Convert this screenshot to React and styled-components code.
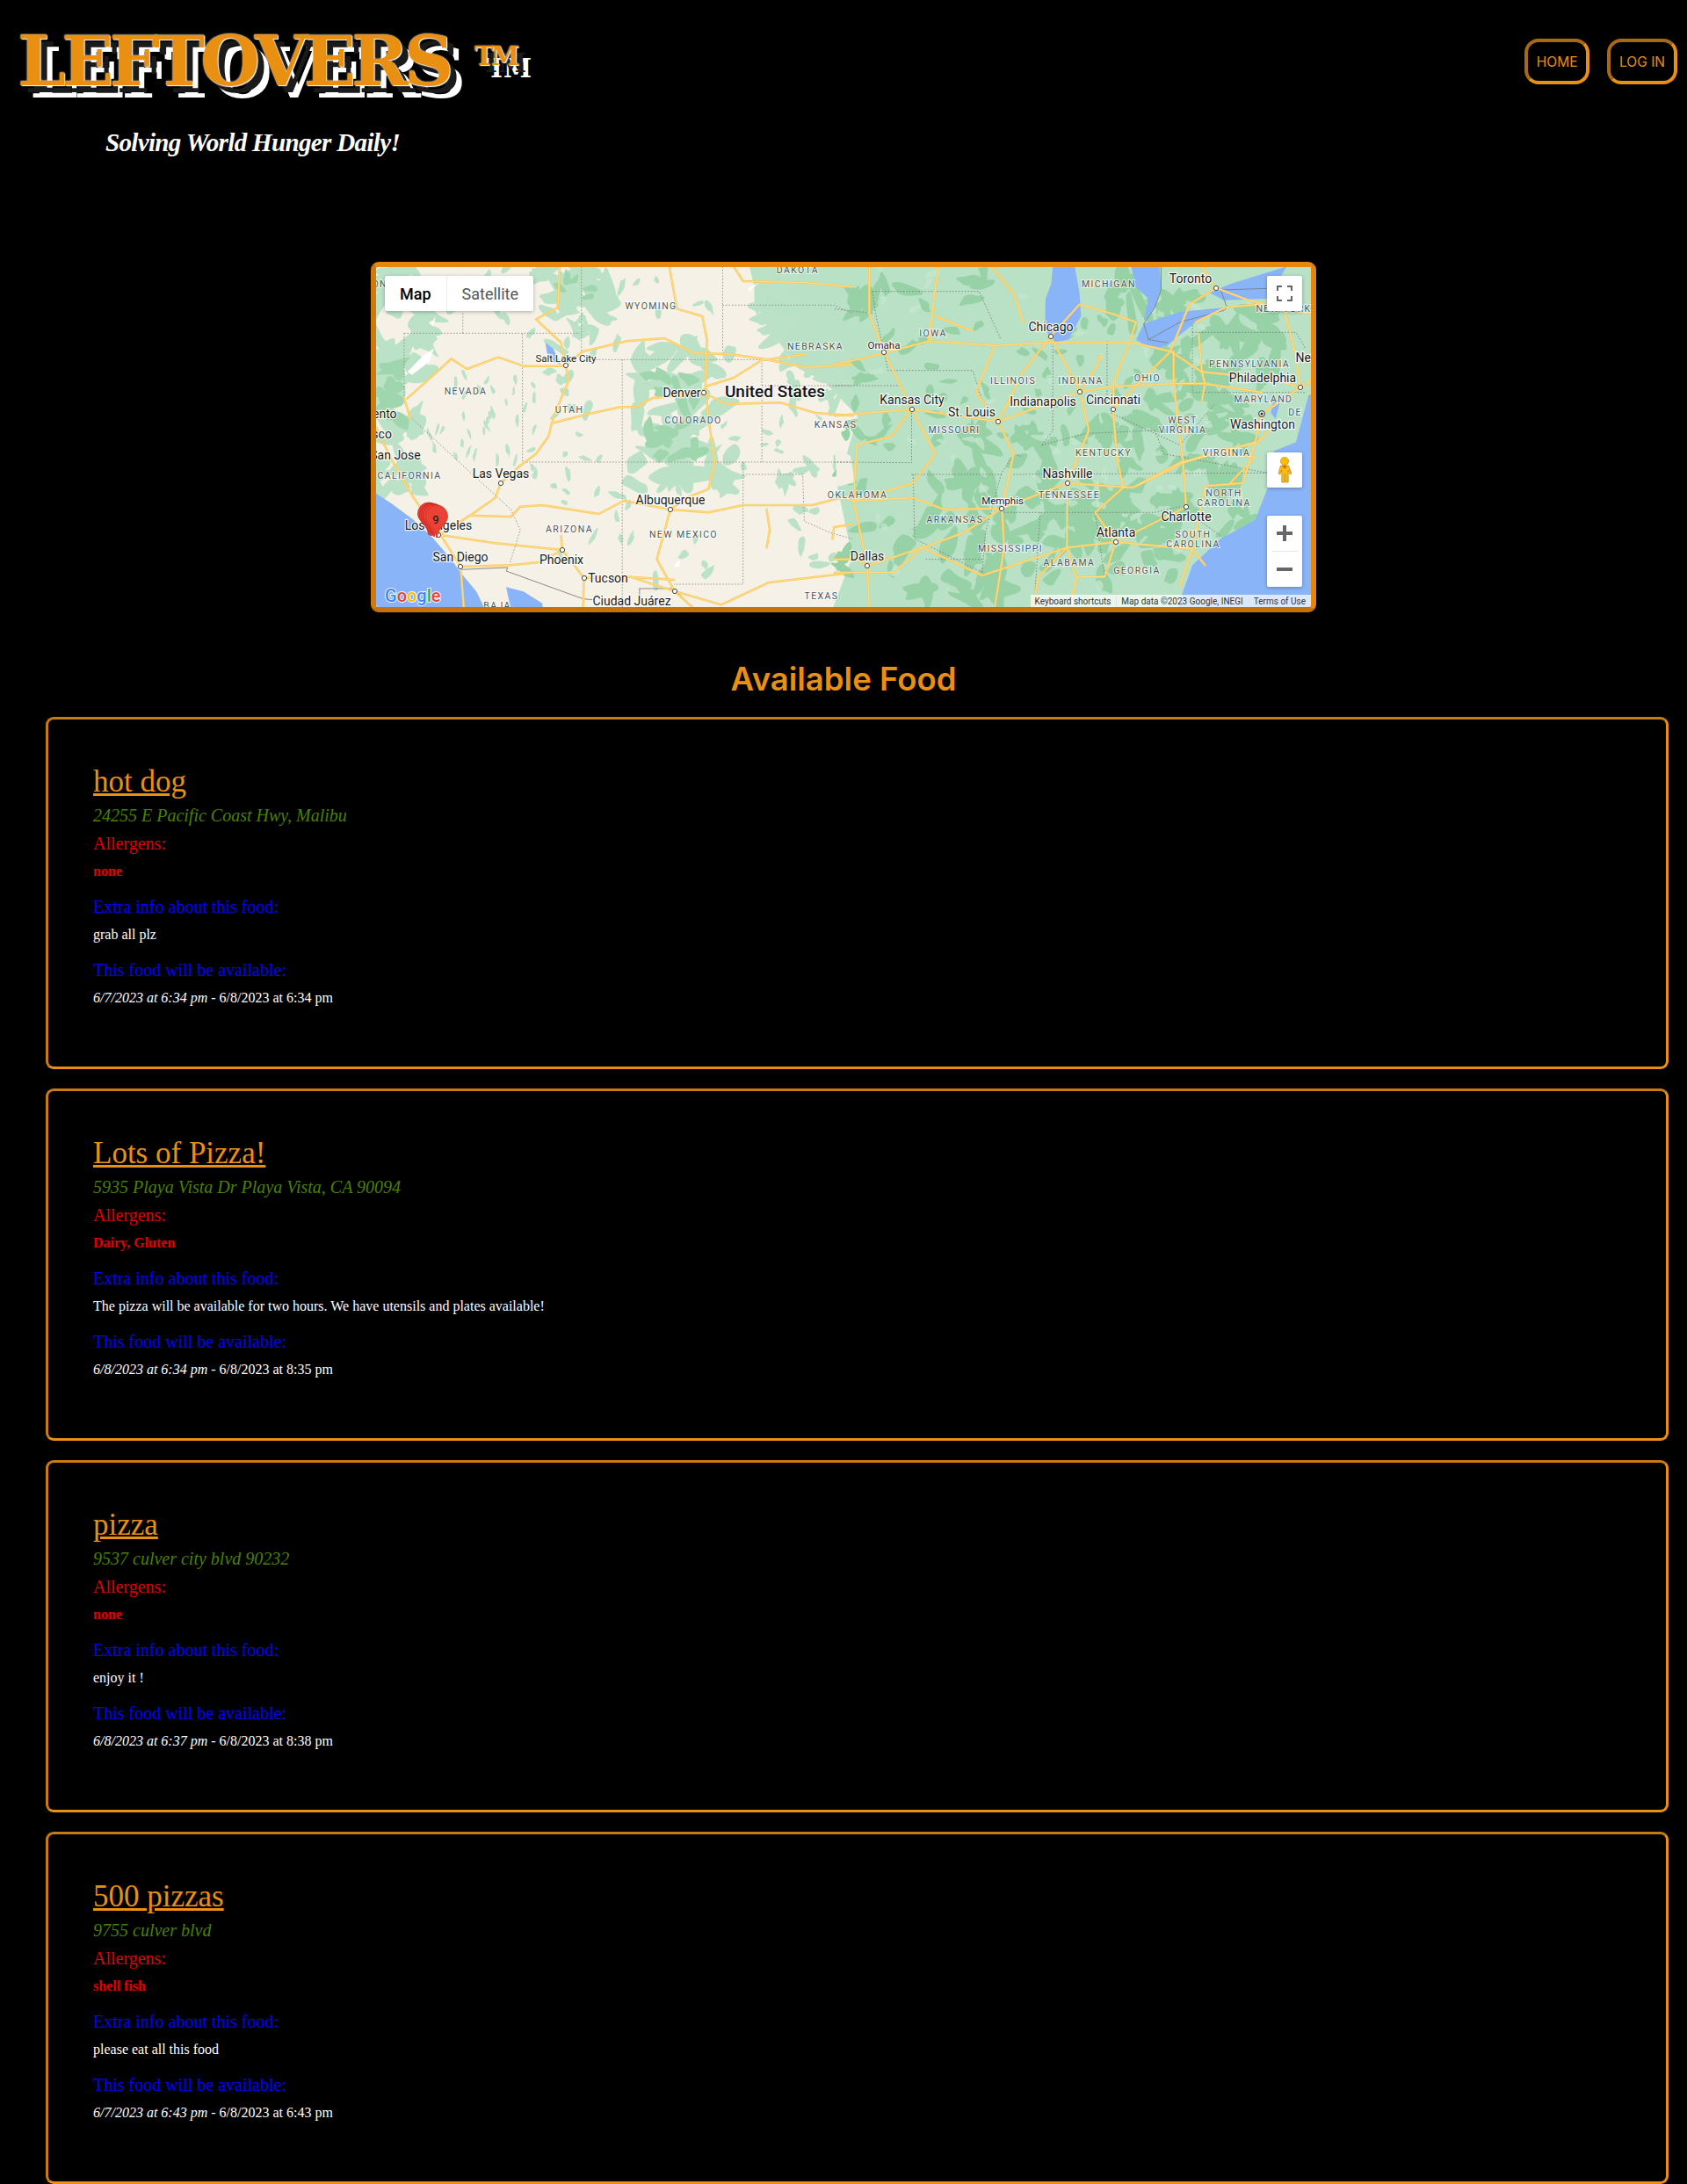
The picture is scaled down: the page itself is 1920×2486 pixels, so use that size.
import React from 'react';
import styled, { createGlobalStyle } from 'styled-components';

const orange = '#e98f12';
const orangeDim = '#c67c10';

const GlobalStyle = createGlobalStyle`
  html, body {
    margin: 0;
    background: #000;
  }
`;

const Page = styled.div`
  width: 1920px;
  height: 2486px;
  overflow: hidden;
  background: #000;
  font-family: 'Liberation Serif', serif;
`;

const Header = styled.header`
  display: flex;
  justify-content: space-between;
  align-items: flex-start;
  height: 298px;
  box-sizing: border-box;
  padding: 44px 11px 0 20px;
`;

const Brand = styled.div`
  display: flex;
  flex-direction: column;
`;

const LogoRow = styled.div`
  display: flex;
  align-items: flex-start;
  margin-top: -26px;
`;

const threeD = `
  0 0 2px #fff,
  1px 1px 1px #fff,
  8px 8px 0 #1a1a1a,
  14px 14px 0 #fff
`;

const Logo = styled.h1`
  margin: 0;
  font-family: 'DejaVu Serif', serif;
  font-size: 78px;
  line-height: 104px;
  font-weight: 700;
  letter-spacing: -4.9px;
  color: ${orange};
  text-shadow: ${threeD};
`;

const Trademark = styled.span`
  margin: 27px 0 0 29px;
  font-family: 'DejaVu Serif', serif;
  font-size: 29px;
  line-height: 38px;
  font-weight: 700;
  letter-spacing: -3px;
  color: ${orange};
  text-shadow: ${threeD};
`;

const Tagline = styled.p`
  margin: 22px 0 0 100px;
  font-size: 29px;
  line-height: 36px;
  font-style: italic;
  font-weight: 700;
  letter-spacing: -0.65px;
  color: #fff;
`;

const Nav = styled.nav`
  display: flex;
  gap: 20px;
`;

const NavButton = styled.a`
  display: flex;
  align-items: center;
  height: 52px;
  box-sizing: border-box;
  padding: 0 ${(p) => p.$pad}px;
  border: 4px solid;
  border-color: #a86a10 ${orange} ${orange} #a86a10;
  border-radius: 16px;
  color: ${orange};
  font-family: Inter, sans-serif;
  font-size: 15.5px;
`;

const MapFrame = styled.div`
  position: relative;
  width: 1076px;
  height: 399px;
  box-sizing: border-box;
  margin: 0 auto;
  border: 6px solid;
  border-color: #e8870c #e5860c #c77208 #d07a0c;
  border-radius: 9px;
  overflow: hidden;
  background: #f5f1e6;
`;

const MapSvg = styled.svg`
  display: block;
  width: 1064px;
  height: 387px;

  .city {
    font: 400 14px Roboto, sans-serif;
    fill: #1a1a1a;
    text-anchor: middle;
    stroke: rgba(255, 255, 255, 0.85);
    stroke-width: 2.4px;
    paint-order: stroke;
  }
  .small {
    font-size: 11.5px;
  }
  .country {
    font: 500 19px Roboto, sans-serif;
    fill: #111;
    text-anchor: middle;
    stroke: rgba(255, 255, 255, 0.85);
    stroke-width: 2.4px;
    paint-order: stroke;
  }
  .state {
    font: 400 10.5px Roboto, sans-serif;
    letter-spacing: 1.4px;
    fill: #50565a;
    text-anchor: middle;
    stroke: rgba(255, 255, 255, 0.7);
    stroke-width: 2.2px;
    paint-order: stroke;
  }
`;

const MapType = styled.div`
  position: absolute;
  top: 10px;
  left: 10px;
  display: flex;
  height: 40px;
  background: #fff;
  border-radius: 2px;
  box-shadow: 0 1px 4px rgba(0, 0, 0, 0.3);
`;

const MapTypeOption = styled.span`
  display: flex;
  align-items: center;
  padding: 0 17px;
  font-family: Roboto, sans-serif;
  font-size: 18px;
  font-weight: ${(p) => (p.$active ? 500 : 400)};
  color: ${(p) => (p.$active ? '#000' : '#565656')};
  border-left: ${(p) => (p.$active ? 'none' : '1px solid #ebebeb')};
`;

const MapControl = styled.div`
  position: absolute;
  top: ${(p) => p.$top}px;
  right: 10px;
  width: 40px;
  height: ${(p) => p.$h || 40}px;
  display: flex;
  flex-direction: column;
  align-items: center;
  justify-content: center;
  background: #fff;
  border-radius: 2px;
  box-shadow: 0 1px 4px rgba(0, 0, 0, 0.3);
`;

const ZoomDivider = styled.span`
  width: 30px;
  height: 1px;
  background: #e6e6e6;
`;

const ZoomHalf = styled.span`
  display: flex;
  align-items: center;
  justify-content: center;
  height: 40px;
`;

const Attribution = styled.div`
  position: absolute;
  right: 0;
  bottom: 0;
  display: flex;
  height: 14px;
  align-items: center;
  background: rgba(255, 255, 255, 0.7);
  font-family: Roboto, sans-serif;
  font-size: 10px;
  color: #333;
`;

const AttributionItem = styled.span`
  padding: 0 6px 0 5px;
  border-left: ${(p) => (p.$first ? 'none' : '1px solid #e0e0e0')};
  white-space: nowrap;
`;

const GoogleMark = styled.span`
  position: absolute;
  left: 10px;
  bottom: 3px;
  font-family: Roboto, sans-serif;
  font-size: 20px;
  line-height: 20px;
  font-weight: 500;
  -webkit-text-stroke: 2px rgba(255, 255, 255, 0.9);
  paint-order: stroke fill;
`;

const GoogleLetter = styled.span`
  color: ${(p) => p.$color};
`;

const Heading = styled.h2`
  margin: 52px 0 19px;
  text-align: center;
  font-family: Inter, sans-serif;
  font-size: 36.5px;
  line-height: 48px;
  font-weight: 600;
  color: ${orange};
`;

const FoodList = styled.div`
  display: flex;
  flex-direction: column;
  gap: 22px;
  padding: 0 21px 0 52px;
`;

const Card = styled.article`
  height: 401px;
  box-sizing: border-box;
  padding: 51px 51px 0;
  border: 3px solid;
  border-color: ${orangeDim} ${orange} ${orange} ${orangeDim};
  border-radius: 9px;
`;

const Title = styled.a`
  display: block;
  font-size: 35px;
  line-height: 40px;
  color: ${orange};
  text-decoration: underline;
  text-decoration-thickness: 3px;
`;

const Address = styled.div`
  margin-top: 6px;
  font-size: 20px;
  line-height: 24px;
  font-style: italic;
  color: #4a8000;
`;

const Label = styled.div`
  margin-top: ${(p) => p.$mt}px;
  font-size: 20px;
  line-height: 24px;
  color: ${(p) => p.$color};
`;

const Value = styled.div`
  margin-top: 11px;
  font-size: 16px;
  line-height: 18px;
  color: #fff;
`;

const Allergens = styled(Value)`
  font-weight: 700;
  color: #e00000;
`;

const AltStart = styled.em`
  font-style: italic;
`;

const foods = [
  {
    title: 'hot dog',
    address: '24255 E Pacific Coast Hwy, Malibu',
    allergens: 'none',
    info: 'grab all plz',
    start: '6/7/2023 at 6:34 pm',
    end: '6/8/2023 at 6:34 pm',
  },
  {
    title: 'Lots of Pizza!',
    address: '5935 Playa Vista Dr Playa Vista, CA 90094',
    allergens: 'Dairy, Gluten',
    info: 'The pizza will be available for two hours. We have utensils and plates available!',
    start: '6/8/2023 at 6:34 pm',
    end: '6/8/2023 at 8:35 pm',
  },
  {
    title: 'pizza',
    address: '9537 culver city blvd 90232',
    allergens: 'none',
    info: 'enjoy it !',
    start: '6/8/2023 at 6:37 pm',
    end: '6/8/2023 at 8:38 pm',
  },
  {
    title: '500 pizzas',
    address: '9755 culver blvd',
    allergens: 'shell fish',
    info: 'please eat all this food',
    start: '6/7/2023 at 6:43 pm',
    end: '6/8/2023 at 6:43 pm',
  },
];

// map labels, in px inside the map
const cities = [
  ['Salt Lake City', 216, 108, 1], ['Denver', 348, 148], ['Las Vegas', 142, 240], ['Los Angeles', 71, 299],
  ['Albuquerque', 335, 270], ['San Diego', 96, 335], ['Phoenix', 211, 338], ['Tucson', 264, 359],
  ['Ciudad Juárez', 291, 385], ['Toronto', 927, 18], ['Chicago', 768, 73], ['Omaha', 578, 93, 1],
  ['Philadelphia', 1009, 131], ['Kansas City', 610, 156], ['Indianapolis', 759, 158], ['Cincinnati', 839, 156],
  ['St. Louis', 678, 170], ['Washington', 1009, 184], ['Nashville', 787, 240], ['Memphis', 713, 270, 1],
  ['Charlotte', 922, 289], ['Atlanta', 842, 307], ['Dallas', 559, 334], ['Sacramento', -14, 172], ['San Francisco', -26, 195],
  ['San Jose', 22, 219], ['New York', 1076, 108],
];

const states = [
  ['DAKOTA', 480, 7], ['WYOMING', 313, 48], ['NEBRASKA', 500, 94], ['NEVADA', 102, 145], ['UTAH', 220, 166],
  ['COLORADO', 361, 178], ['KANSAS', 523, 183], ['CALIFORNIA', 38, 241], ['ARIZONA', 220, 302],
  ['NEW MEXICO', 350, 308], ['BAJA', 138, 389], ['TEXAS', 507, 378], ['OKLAHOMA', 548, 263], ['MICHIGAN', 834, 23],
  ['NEW YORK', 1033, 51], ['IOWA', 634, 79], ['PENNSYLVANIA', 994, 114], ['ILLINOIS', 725, 133], ['INDIANA', 802, 133],
  ['OHIO', 878, 130], ['MARYLAND', 1010, 154], ['DE', 1046, 169], ['MISSOURI', 658, 189], ['WEST', 918, 178],
  ['VIRGINIA', 918, 189], ['KENTUCKY', 828, 215], ['VIRGINIA', 968, 215], ['TENNESSEE', 789, 263], ['NORTH', 965, 261],
  ['CAROLINA', 965, 272], ['ARKANSAS', 659, 291], ['SOUTH', 930, 308], ['CAROLINA', 930, 319], ['MISSISSIPPI', 722, 324],
  ['ALABAMA', 789, 340], ['GEORGIA', 866, 349], ['OREGON', -12, 23], ['IDAHO', 160, 33],
];

const dots = [
  [216, 112], [373, 143], [142, 246], [71, 305], [335, 276], [96, 341], [212, 322], [237, 354], [340, 369],
  [956, 24], [768, 79], [578, 97], [1052, 137], [801, 142], [610, 162], [839, 162], [708, 176], [787, 246],
  [712, 275], [922, 273], [842, 313], [559, 340],
];

// roads and borders below are in the 1568px wide crops, west half and east half
const westRoads = [
  '150,490 245,400 290,355 340,390 440,350 520,380 650,380 710,330 850,295 970,285 1060,335 1180,340 1280,355 1420,385 1568,375',
  '610,575 720,545 830,520 880,520 930,490 1095,471 1165,510 1340,505 1450,540 1568,550',
  '635,40 630,180 560,220 640,300 655,380 665,430 640,490 610,575 600,620 560,680 510,720 448,779 430,830 350,890 255,955',
  '350,890 480,895 510,860 580,855 760,885 840,840 988,870 1110,880 1220,855 1440,855 1568,820',
  '255,957 430,985 644,1008 713,1104 860,1100 1002,1149 1150,1195 1300,1120 1568,1085',
  '985,40 1000,130 1010,185 1090,210 1105,290 1100,450 1110,560 1130,710 1110,800 1040,830 988,870 945,1040 1002,1149 1060,1205',
  '50,590 100,700 170,830 255,955 320,1065 330,1205',
  '140,490 160,560',
  '1100,450 1190,420 1280,360 1420,340',
  '1190,40 1220,90 1420,95 1568,110',
  '640,960 644,1008 570,1050 480,1060 320,1065',
  '1295,870 1305,940 1295,1000',
  '1568,920 1510,930 1505,970',
  '713,1104 710,1205',
  '860,1100 1000,1110',
];

const eastRoads = [
  '0,375 160,335 300,295 510,310 690,300 950,300 1070,330 1170,400 1400,425 1484,453 1518,430',
  '0,550 246,527 522,570 782,467 887,450 1080,440 1180,440 1362,470',
  '0,820 60,840 250,830 350,870 533,866 741,780 950,795 1100,710 1350,640 1400,580',
  '0,1085 190,1085 280,1000 470,1095 740,1000 895,981 1140,1005 1180,1060',
  '246,527 180,620 70,650 60,840 104,1062 110,1205',
  '246,527 158,334 110,200 110,40',
  '688,279 782,467 810,600 741,780 740,1000 650,1100 630,1205',
  '688,279 600,400 522,570 570,680 533,866 540,1000 510,1205',
  '1070,330 887,527 900,700 920,795 830,880 895,981 860,1100 770,1100 750,1205',
  '1484,453 1362,544 1340,640 1110,710 1120,861 895,981',
  '1340,640 1300,780 1180,790 1140,1005 1100,1130',
  '1215,113 1130,170 1070,330',
  '1510,200 1340,170 1245,180 1150,230',
  '510,310 450,470 520,570',
  '300,295 320,120 330,40',
  '600,230 570,130 500,40',
  '688,279 780,170 880,200 960,230 940,300 890,430 887,527',
  '1160,270 1170,400 1180,440 1170,500',
  '1170,40 1215,113 1330,160 1430,180 1450,260 1470,350 1484,453',
  '0,1040 70,1040 104,1062 280,1000',
  '533,866 410,950 280,1000',
  '246,527 320,680 250,780 60,840',
  '840,350 850,345 830,390 782,467',
  '1080,330 1080,440 1110,710',
  '1245,680 1340,690 1260,780',
  '960,790 1020,760 1110,710 1250,660',
  '320,210 440,260',
  '740,1000 770,1100 860,1100',
];

const westBorders = [
  '705,40 705,358 1280,358 1280,708', '140,268 700,268', '327,200 327,268', '140,268 140,490 155,550 480,870 510,940 475,1060',
  '517,270 517,708 1568,708', '835,358 835,1205', '1155,40 1155,340', '1155,172 1510,172 1568,200', '1280,447 1568,447',
  '1220,708 1220,1125 1000,1125', '1220,750 1410,750 1415,910 1500,950 1568,970',
];

const eastBorders = [
  '120,125 460,125 530,290', '0,185 120,200', '120,125 130,200 170,395 440,395 470,500', '0,447 210,447 245,530 245,710 0,708',
  '245,750 530,750 570,680 600,690', '250,750 255,970 480,1090', '290,1040 470,1040', '540,880 1020,880', '570,750 1380,745',
  '695,300 695,600 660,650', '868,295 868,500', '1140,240 1140,470 1500,470', '1140,265 1470,265 1500,320', '655,880 635,1205',
  '830,880 860,1100', '530,750 480,950 470,1090', '660,650 800,610 1020,600', '880,540 1100,650 1210,510', '1020,880 1100,860 1230,960', '1020,600 1050,680 1380,745',
];

const mexicoBorders = [
  '320,1075 470,1068 465,1080 710,1175 740,1178', '890,1140 1000,1140 1060,1205', '890,1140 890,1175',
];

const lakeBorders = [
  '1040,40 1040,120 1020,180 985,235 1000,290 1060,300', '1230,120 1380,115', '1000,290 1100,230 1240,190 1250,180 1230,120',
];

const pacific = '50,815 100,850 170,905 230,965 290,1040 320,1085 370,1150 395,1205 50,1205';
const gulf = '465,1135 520,1150 580,1190 582,1210 480,1210';
const saltLake = '590,300 615,320 640,375 615,365 595,335';

const michiganLake = '695,40 765,40 780,130 785,210 745,290 695,300 670,250 672,150 690,100';
const huron = '945,40 1035,40 1040,110 1020,180 985,225 1000,150 960,110';
const erie = '960,290 985,235 1100,195 1245,180 1150,230 1060,310 1010,320';
const ontario = '1195,130 1260,100 1380,60 1440,40 1380,150 1240,155';
const atlantic = '1568,450 1510,480 1490,560 1470,640 1400,670 1378,800 1340,905 1230,970 1140,1060 1090,1210 1568,1210';
const chesapeake = '1400,490 1420,500 1405,560 1390,540';

const eastLand = '425,0 1064,0 1064,388 520,388 542,330 525,250 548,170 510,130 480,115 440,60';

// small seeded generator so the terrain is the same on every load
function seeded(start) {
  let s = start;
  return () => {
    s = (s * 16807) % 2147483647;
    return s / 2147483647;
  };
}

// returns closed smooth paths, corners rounded through the edge midpoints
function blobs(rand, cx, cy, rx, ry, count, size, upright) {
  const out = [];
  for (let i = 0; i < count; i += 1) {
    const x = cx + (rand() * 2 - 1) * rx;
    const y = cy + (rand() * 2 - 1) * ry;
    const tilt = upright ? Math.PI / 2 + (rand() - 0.5) * 0.9 : rand() * Math.PI;
    const stretch = upright ? 2.4 + rand() * 2 : 1.2 + rand() * 1.8;
    const pts = [];
    for (let a = 0; a < 9; a += 1) {
      const ang = (a / 9) * Math.PI * 2;
      const r = size * (0.45 + rand() * 0.85);
      const px = Math.cos(ang) * r * stretch;
      const py = Math.sin(ang) * r;
      pts.push([x + px * Math.cos(tilt) - py * Math.sin(tilt), y + px * Math.sin(tilt) + py * Math.cos(tilt)]);
    }
    const mid = (p, q) => `${((p[0] + q[0]) / 2).toFixed(1)} ${((p[1] + q[1]) / 2).toFixed(1)}`;
    let d = `M${mid(pts[8], pts[0])}`;
    pts.forEach((p, n) => {
      d += ` Q${p[0].toFixed(1)} ${p[1].toFixed(1)} ${mid(p, pts[(n + 1) % 9])}`;
    });
    out.push(`${d}Z`);
  }
  return out;
}

const rand = seeded(4217);
const lightPatches = [
  ...blobs(rand, 30, 70, 35, 75, 30, 10), ...blobs(rand, 25, 190, 26, 65, 34, 8), ...blobs(rand, 120, 40, 60, 45, 12, 4),
  ...blobs(rand, 225, 90, 32, 90, 22, 5.5), ...blobs(rand, 225, 25, 38, 30, 18, 10), ...blobs(rand, 350, 170, 55, 80, 48, 10),
  ...blobs(rand, 120, 170, 62, 50, 34, 2.2, true), ...blobs(rand, 215, 230, 40, 40, 12, 3.4), ...blobs(rand, 310, 225, 40, 40, 8, 4),
  ...blobs(rand, 345, 335, 40, 30, 5, 4.5), ...blobs(rand, 250, 60, 45, 40, 8, 4.5), ...blobs(rand, 330, 30, 55, 25, 5, 3.5),
  ...blobs(rand, 450, 40, 30, 40, 14, 8), ...blobs(rand, 440, 205, 70, 40, 14, 3.2), ...blobs(rand, 490, 280, 35, 60, 14, 5),
  ...blobs(rand, 500, 120, 45, 35, 20, 6), ...blobs(rand, 250, 300, 40, 30, 6, 3, true),
];
const midPatches = [
  ...blobs(rand, 18, 140, 18, 40, 10, 8), ...blobs(rand, 340, 175, 30, 55, 18, 6.5), ...blobs(rand, 225, 20, 25, 20, 5, 5),
];
const darkPatches = [
  ...blobs(rand, 700, 240, 70, 60, 26, 9), ...blobs(rand, 660, 330, 60, 50, 20, 11), ...blobs(rand, 900, 240, 90, 70, 60, 8),
  ...blobs(rand, 960, 90, 70, 40, 30, 9), ...blobs(rand, 820, 300, 100, 60, 42, 9), ...blobs(rand, 620, 30, 80, 25, 18, 7),
  ...blobs(rand, 880, 30, 50, 25, 14, 9), ...blobs(rand, 940, 150, 60, 30, 22, 8), ...blobs(rand, 560, 260, 30, 90, 14, 6),
  ...blobs(rand, 760, 130, 110, 70, 30, 5), ...blobs(rand, 600, 130, 60, 60, 14, 5),
];
const palePatches = blobs(rand, 800, 180, 240, 190, 70, 4);
const snow = [
  'M150 400L200 345 235 320 220 365 165 410Z', 'M225 235L240 210 232 245Z', 'M1235 115L1270 95 1240 125Z', 'M1000 1060L1018 1040 1018 1065 1003 1065Z',
];
const beigeSpot = '522,205 540,215 545,245 525,250';

function Patches({ list, fill, opacity }) {
  return list.map((d, i) => <path key={i} d={d} fill={fill} opacity={opacity} />);
}

function Lines({ list, stroke, width, dash }) {
  return list.map((points, i) => (
    <polyline
      key={i}
      points={points}
      fill="none"
      stroke={stroke}
      strokeWidth={width}
      strokeDasharray={dash}
      strokeLinejoin="round"
      strokeLinecap={dash ? 'butt' : 'round'}
      vectorEffect="non-scaling-stroke"
    />
  ));
}

function Pin({ x, y, front }) {
  return (
    <path
      transform={`translate(${x} ${y})`}
      d="M0 0 C-1.5 -6 -3 -9 -6.500 -13 C-10 -17 -12.500 -20 -12.500 -24.500 A12.500 12.500 0 0 1 12.500 -24.500 C12.500 -20 10 -17 6.500 -13 C3 -9 1.500 -6 0 0 Z"
      fill="#ea4335"
      stroke={front ? '#d33125' : '#c5221f'}
      strokeWidth="0.8"
    />
  );
}

function MapPicture() {
  return (
    <MapSvg viewBox="0 0 1064 387">
      <rect width="1064" height="387" fill="#f5f1e6" />
      <polygon points={eastLand} fill="#b8e1c6" />
      <Patches list={lightPatches} fill="#bbe2c6" />
      <Patches list={midPatches} fill="#9fd6ad" />
      <Patches list={darkPatches} fill="#97d1a6" />
      <Patches list={palePatches} fill="#c6e8d0" opacity="0.7" />
      <polygon points={beigeSpot} fill="#f3efe3" />
      <g transform="translate(-18 -14) scale(0.35714 0.33333)">
        <Patches list={snow} fill="#fff" />
        <polygon points={pacific} fill="#8ab4f8" />
        <polygon points={gulf} fill="#8ab4f8" />
        <polygon points={saltLake} fill="#8ab4f8" />
      </g>
      <g transform="translate(522 -14) scale(0.35714 0.33333)">
        <polygon points={michiganLake} fill="#8ab4f8" />
        <polygon points={huron} fill="#8ab4f8" />
        <polygon points={erie} fill="#8ab4f8" />
        <polygon points={ontario} fill="#8ab4f8" />
        <polygon points={atlantic} fill="#8ab4f8" />
        <polygon points={chesapeake} fill="#8ab4f8" />
      </g>
      <g transform="translate(-18 -14) scale(0.35714 0.33333)">
        <Lines list={westBorders} stroke="#8a8a8a" width={0.9} dash="1.5 2" />
        <Lines list={mexicoBorders} stroke="#8a8a8a" width={1} />
        <Lines list={westRoads} stroke="#fbc85c" width={2.5} />
        <Lines list={westRoads} stroke="#fee08b" width={1} />
      </g>
      <g transform="translate(522 -14) scale(0.35714 0.33333)">
        <Lines list={eastBorders} stroke="#7a7a7a" width={0.9} dash="1.5 2" />
        <Lines list={lakeBorders} stroke="#7b8794" width={1} />
        <Lines list={eastRoads} stroke="#fbc85c" width={2.5} />
        <Lines list={eastRoads} stroke="#fee08b" width={1} />
      </g>
      {states.map(([name, x, y]) => (
        <text key={`${name}${x}`} className="state" x={x} y={y}>{name}</text>
      ))}
      {dots.map(([x, y]) => (
        <circle key={`${x}-${y}`} cx={x} cy={y} r="2.6" fill="#fff" stroke="#444" strokeWidth="1" />
      ))}
      <circle cx="1008" cy="167" r="3.4" fill="#fff" stroke="#222" strokeWidth="1" />
      <circle cx="1008" cy="167" r="1.5" fill="#222" />
      {cities.map(([name, x, y, small]) => (
        <text key={name} className={small ? 'city small' : 'city'} x={x} y={y}>{name}</text>
      ))}
      <text className="country" x="454" y="148">United States</text>
      <Pin x={60} y={305} />
      <Pin x={62} y={306} />
      <Pin x={64} y={306} />
      <Pin x={66} y={307} />
      <Pin x={69} y={308} front />
      <text x="68" y="292" fontFamily="Roboto, sans-serif" fontSize="13" fill="#111" textAnchor="middle">9</text>
    </MapSvg>
  );
}

function MapWidget() {
  return (
    <MapFrame>
      <MapPicture />
      <MapType>
        <MapTypeOption $active>Map</MapTypeOption>
        <MapTypeOption>Satellite</MapTypeOption>
      </MapType>
      <MapControl $top={10}>
        <svg width="18" height="18" viewBox="0 0 18 18" fill="none" stroke="#666" strokeWidth="2">
          <path d="M1 6V1h5M12 1h5v5M17 12v5h-5M6 17H1v-5" />
        </svg>
      </MapControl>
      <MapControl $top={211}>
        <svg width="18" height="30" viewBox="0 0 18 30">
          <circle cx="9" cy="5" r="4.600" fill="#fbbc04" stroke="#b8860b" strokeWidth="0.6" />
          <path
            d="M4.500 10h9l3.500 9-2 1-1.800-5V29h-3.300v-9h-.8v9H5.800V15L4 20l-2-1z"
            fill="#fbbc04"
            stroke="#a9770a"
            strokeWidth="0.6"
          />
          <path d="M6 10l3 4 3-4z" fill="#e0642a" />
        </svg>
      </MapControl>
      <MapControl $top={283} $h={81}>
        <ZoomHalf>
          <svg width="18" height="18" viewBox="0 0 18 18" fill="#666">
            <path d="M7 0h4v7h7v4h-7v7H7v-7H0V7h7z" />
          </svg>
        </ZoomHalf>
        <ZoomDivider />
        <ZoomHalf>
          <svg width="18" height="18" viewBox="0 0 18 18" fill="#666">
            <path d="M0 7h18v4H0z" />
          </svg>
        </ZoomHalf>
      </MapControl>
      <GoogleMark>
        <GoogleLetter $color="#4285f4">G</GoogleLetter>
        <GoogleLetter $color="#ea4335">o</GoogleLetter>
        <GoogleLetter $color="#fbbc04">o</GoogleLetter>
        <GoogleLetter $color="#4285f4">g</GoogleLetter>
        <GoogleLetter $color="#34a853">l</GoogleLetter>
        <GoogleLetter $color="#ea4335">e</GoogleLetter>
      </GoogleMark>
      <Attribution>
        <AttributionItem $first>Keyboard shortcuts</AttributionItem>
        <AttributionItem>Map data ©2023 Google, INEGI</AttributionItem>
        <AttributionItem>Terms of Use</AttributionItem>
      </Attribution>
    </MapFrame>
  );
}

function FoodCard({ food }) {
  return (
    <Card>
      <Title>{food.title}</Title>
      <Address>{food.address}</Address>
      <Label $mt={8} $color="#e00000">Allergens:</Label>
      <Allergens>{food.allergens}</Allergens>
      <Label $mt={19} $color="#0000ff">Extra info about this food:</Label>
      <Value>{food.info}</Value>
      <Label $mt={19} $color="#0000ff">This food will be available:</Label>
      <Value>
        <AltStart>{food.start}</AltStart> - {food.end}
      </Value>
    </Card>
  );
}

export default function App() {
  return (
    <Page>
      <GlobalStyle />
      <Header>
        <Brand>
          <LogoRow>
            <Logo>LEFTOVERS</Logo>
            <Trademark>TM</Trademark>
          </LogoRow>
          <Tagline>Solving World Hunger Daily!</Tagline>
        </Brand>
        <Nav>
          <NavButton $pad={9.5}>HOME</NavButton>
          <NavButton $pad={10}>LOG IN</NavButton>
        </Nav>
      </Header>
      <MapWidget />
      <Heading>Available Food</Heading>
      <FoodList>
        {foods.map((food) => (
          <FoodCard key={food.title} food={food} />
        ))}
      </FoodList>
    </Page>
  );
}
